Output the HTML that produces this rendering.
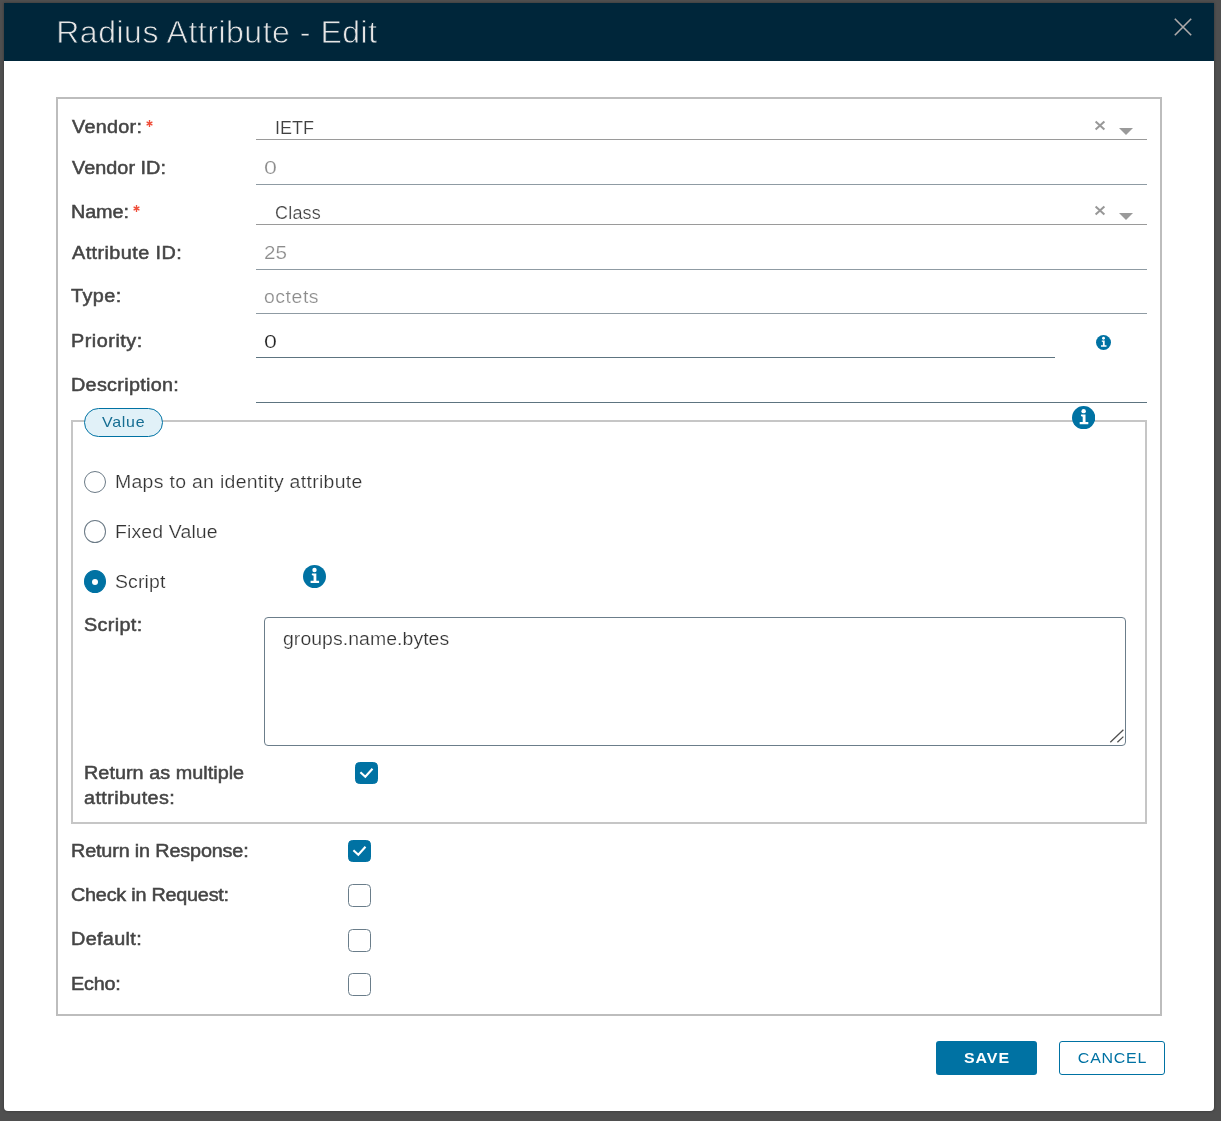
<!DOCTYPE html>
<html>
<head>
<meta charset="utf-8">
<title>Radius Attribute - Edit</title>
<style>
*{box-sizing:border-box;margin:0;padding:0}
html,body{width:1221px;height:1121px;overflow:hidden}
body{background:#4f4f4f;font-family:"Liberation Sans",sans-serif;position:relative;color:#454545}
.abs{position:absolute}
#root{position:absolute;left:0;top:0;width:1221px;height:1121px;will-change:transform}
#dlg{position:absolute;left:4px;top:3px;width:1210px;height:1108px;background:#fff;border-radius:0 0 4px 4px;box-shadow:0 0 3px rgba(0,0,0,.35)}
#hdr{position:absolute;left:4px;top:3px;width:1210px;height:58px;background:#00263a}
#title{position:absolute;left:56.2px;top:13.5px;font-size:32px;line-height:36px;color:#e6e6e6;white-space:nowrap;letter-spacing:0.52px;-webkit-text-stroke:0.8px #00263a}
#box{position:absolute;left:56px;top:97px;width:1106px;height:919px;border:2px solid #bdbdbd}
.lbl{position:absolute;left:71px;font-weight:normal;font-size:18px;line-height:22px;color:#454545;white-space:nowrap;-webkit-text-stroke:0.5px #454545;transform:scaleX(1.1);transform-origin:0 0}
.lbl.req{color:#f04a36;font-weight:normal;font-size:21px;-webkit-text-stroke:0;transform:none}
.val{position:absolute;font-size:18px;line-height:22px;white-space:nowrap;color:#333;-webkit-text-stroke:0.22px #fff;transform-origin:0 0}
.dis{color:#8c8c8c}
.ul{position:absolute;left:256px;height:1px;width:891px;background:#9a9a9a}
.cb{position:absolute;width:23px;height:23px;border:1px solid #6a7d8a;border-radius:4.5px;background:#fff}
.cb.on{background:#0072a3;border-color:#0072a3;height:22px}
.radio{position:absolute;left:84px;width:22px;height:22px;border-radius:50%;border:1px solid #6b7a86;background:#fff}
.rl{position:absolute;left:115px;font-size:18px;line-height:22px;color:#333;white-space:nowrap;-webkit-text-stroke:0.22px #fff;transform:scaleX(1.08);transform-origin:0 0}
#fs{position:absolute;left:71px;top:420px;width:1076px;height:404px;border:2px solid #c6c6c6}
#pill{position:absolute;left:84px;top:408px;width:79px;height:29px;border:1px solid #0072a3;border-radius:15px;background:#e1f1f8;color:#156d92;font-size:14.5px;line-height:27px;text-align:center;letter-spacing:0.66px;padding-left:1px}
#pill span{display:inline-block;transform:scaleX(1.1)}
.radio.on{background:#0072a3;border-color:#0072a3}
.radio.on:after{content:"";position:absolute;left:7px;top:7.5px;width:6px;height:6px;border-radius:50%;background:#fff}
#ta{position:absolute;left:264px;top:617px;width:862px;height:129px;border:1px solid #6b7d8a;border-radius:4px;background:#fff}
.cb svg{position:absolute;left:-1px;top:-1px}
#save,#cancel{position:absolute;top:1041px;height:34px;border-radius:3px;font-size:14.5px;line-height:34px;text-align:center}
#save{left:936px;width:101px;background:#0072a3;color:#fff;font-weight:bold;letter-spacing:0.9px;padding-left:0.9px}
#cancel{left:1059px;width:106px;border:1px solid #0072a3;color:#0072a3;line-height:32px;background:#fff;letter-spacing:0.7px;padding-left:0.7px}
#save span,#cancel span{display:inline-block;transform:scaleX(1.1)}
</style>
</head>
<body>
<div id="root">
<div id="dlg"></div>
<div id="hdr"></div>
<div id="title">Radius Attribute - Edit</div>
<svg class="abs" style="left:1173px;top:17px" width="20" height="20" viewBox="0 0 20 20"><path d="M1.8 1.8 L18.2 18.2 M18.2 1.8 L1.8 18.2" stroke="#aeaaaa" stroke-width="1.6" fill="none"/></svg>

<div id="box"></div>

<div class="lbl" style="left:72px;top:116px;letter-spacing:0.26px">Vendor:</div>
<svg class="abs" style="left:145.1px;top:119px" width="9" height="9" viewBox="-4.5 -4.5 9 9"><path d="M0 -3.6 V3.6 M-2.9 -1.6 L2.9 1.6 M-2.9 1.6 L2.9 -1.6" stroke="#ef4e3a" stroke-width="1.35" fill="none"/></svg>
<div class="lbl" style="left:72px;top:157px;letter-spacing:0.04px">Vendor ID:</div>
<div class="lbl" style="top:201px;letter-spacing:-0.09px">Name:</div>
<svg class="abs" style="left:132.1px;top:204px" width="9" height="9" viewBox="-4.5 -4.5 9 9"><path d="M0 -3.6 V3.6 M-2.9 -1.6 L2.9 1.6 M-2.9 1.6 L2.9 -1.6" stroke="#ef4e3a" stroke-width="1.35" fill="none"/></svg>
<div class="lbl" style="left:72px;top:242px;letter-spacing:0.39px">Attribute ID:</div>
<div class="lbl" style="top:285px;letter-spacing:0.41px">Type:</div>
<div class="lbl" style="top:330px;letter-spacing:0.47px">Priority:</div>
<div class="lbl" style="top:374px;letter-spacing:0.27px">Description:</div>

<div class="val" style="left:275px;top:117px;color:#404040">IETF</div>
<div class="val dis" style="left:263.6px;top:157px;font-size:18.3px;transform:scaleX(1.27)">0</div>
<div class="val" style="left:275px;top:202px;letter-spacing:0.2px;color:#404040">Class</div>
<div class="val dis" style="left:263.6px;top:242px;font-size:18.3px;transform:scaleX(1.13)">25</div>
<div class="val dis" style="left:264px;top:286px;letter-spacing:0.5px;transform:scaleX(1.08)">octets</div>
<div class="val" style="left:263.6px;top:331px;font-size:18.3px;color:#222;transform:scaleX(1.27)">0</div>

<div class="ul" style="top:139px"></div>
<div class="ul" style="top:184px;background:#8f9ba3"></div>
<div class="ul" style="top:224px"></div>
<div class="ul" style="top:269px;background:#8f9ba3"></div>
<div class="ul" style="top:313px;background:#8f9ba3"></div>
<div class="ul" style="top:357px;width:799px;background:#5d7480"></div>
<div class="ul" style="top:402px;background:#5d7480"></div>


<!-- select controls -->
<svg class="abs" style="left:1094px;top:120px" width="12" height="11" viewBox="0 0 12 11"><path d="M1.6 1.4 L10.4 9.6 M10.4 1.4 L1.6 9.6" stroke="#989898" stroke-width="2" fill="none"/></svg>
<svg class="abs" style="left:1119px;top:128px" width="14" height="7" viewBox="0 0 14 7"><path d="M0 0 H14 L7 7 Z" fill="#9a9a9a"/></svg>
<svg class="abs" style="left:1094px;top:205px" width="12" height="11" viewBox="0 0 12 11"><path d="M1.6 1.4 L10.4 9.6 M10.4 1.4 L1.6 9.6" stroke="#989898" stroke-width="2" fill="none"/></svg>
<svg class="abs" style="left:1119px;top:213px" width="14" height="7" viewBox="0 0 14 7"><path d="M0 0 H14 L7 7 Z" fill="#9a9a9a"/></svg>

<!-- info icons -->
<svg class="abs" style="left:1095.5px;top:334.5px" width="15" height="15" viewBox="0 0 100 100"><use href="#info"/></svg>

<!-- fieldset -->
<div id="fs"></div>
<div id="pill"><span>Value</span></div>
<svg class="abs" style="left:1071.8px;top:405.8px" width="23.3" height="23.3" viewBox="0 0 100 100"><use href="#info"/></svg>

<div class="radio" style="top:471px"></div>
<div class="radio" style="top:520px;height:23px"></div>
<div class="radio on" style="top:570px;height:23px"></div>
<div class="rl" style="top:471px;letter-spacing:0.28px">Maps to an identity attribute</div>
<div class="rl" style="top:521px;letter-spacing:0.13px">Fixed Value</div>
<div class="rl" style="top:571px;letter-spacing:0.11px">Script</div>
<svg class="abs" style="left:303px;top:565px" width="23" height="23" viewBox="0 0 100 100"><use href="#info"/></svg>

<div class="lbl" style="left:84px;top:614px;letter-spacing:0.32px">Script:</div>
<div id="ta"></div>
<div class="val" style="left:283px;top:628px;letter-spacing:0.05px;transform:scaleX(1.08)">groups.name.bytes</div>
<svg class="abs" style="left:1109px;top:729px" width="16" height="16" viewBox="0 0 16 16"><path d="M1.3 13.3 L14.4 0.8 M8.4 13.3 L14.4 7.6" stroke="#505050" stroke-width="1.3" fill="none"/></svg>

<div class="lbl" style="left:84px;top:762px;letter-spacing:0.03px">Return as multiple</div>
<div class="lbl" style="left:84px;top:787px;letter-spacing:0.35px">attributes:</div>
<div class="cb on" style="left:355px;top:762px;width:22.5px"><svg width="23" height="23" viewBox="0 0 23 23"><path d="M5.4 10.3 L10.3 14.8 L17.5 6.7" stroke="#fff" stroke-width="2.1" fill="none" stroke-linejoin="miter"/></svg></div>

<div class="lbl" style="top:840px;letter-spacing:-0.14px">Return in Response:</div>
<div class="lbl" style="top:884px;letter-spacing:-0.21px">Check in Request:</div>
<div class="lbl" style="top:928px;letter-spacing:0.32px">Default:</div>
<div class="lbl" style="top:973px;letter-spacing:-0.2px">Echo:</div>
<div class="cb on" style="left:348px;top:840px"><svg width="23" height="23" viewBox="0 0 23 23"><path d="M5.4 10.3 L10.3 14.8 L17.5 6.7" stroke="#fff" stroke-width="2.1" fill="none" stroke-linejoin="miter"/></svg></div>
<div class="cb" style="left:348px;top:884px"></div>
<div class="cb" style="left:348px;top:929px"></div>
<div class="cb" style="left:348px;top:973px"></div>

<div id="save"><span>SAVE</span></div>
<div id="cancel"><span>CANCEL</span></div>

<svg width="0" height="0" style="position:absolute"><defs><g id="info"><circle cx="50" cy="50" r="50" fill="#0072a3"/><circle cx="50" cy="22" r="9.6" fill="#fff"/><path d="M39 37 H58 V69 H70 V78 H33 V69 H46 V46.5 L38 43 Z" fill="#fff"/></g></defs></svg>
</div>
</body>
</html>
